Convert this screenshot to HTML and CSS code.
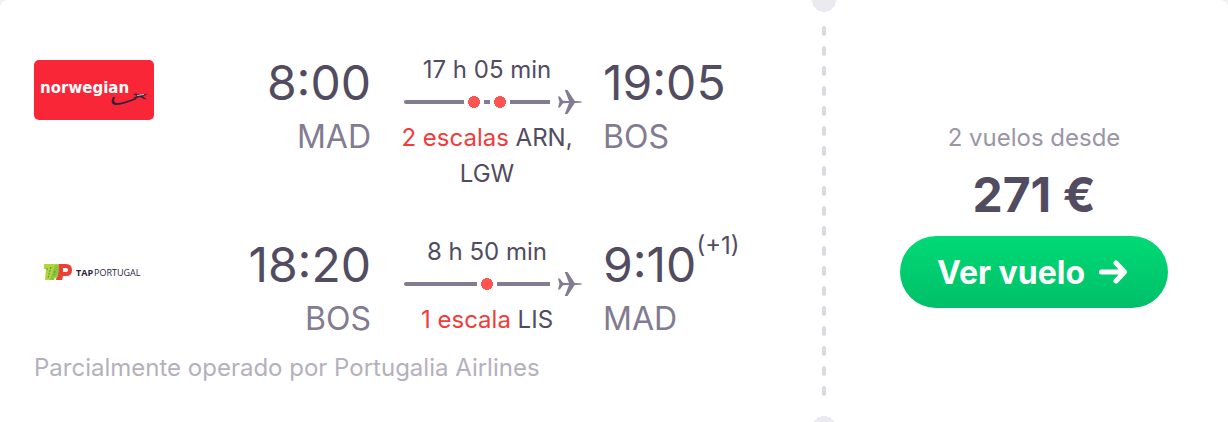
FILE: index.html
```html
<!DOCTYPE html>
<html lang="es">
<head>
  <meta charset="UTF-8" />
  <meta name="viewport" content="width=device-width, initial-scale=1.0" />
  <title>Madrid - Boston</title>
  <link rel="stylesheet" href="styles.css">
</head>
<body>
  <svg width="0" height="0" class="sprite" aria-hidden="true">
    <symbol id="plane" viewBox="0 0 24 24">
      <path d="M0 6.500h1.800L5 10.800l6 .2L6.800 0h2.700l7.200 11 5 .2Q24 11.400 24 12t-2.300.8l-5 .2-7.200 11H6.800L11 13l-6 .2-3.200 4.300H0L1.500 12z" />
    </symbol>
  </svg>

  <article class="ticket">
    <section class="legs">
      <div class="leg">
        <svg class="logo" viewBox="0 0 120 60" role="img" aria-label="norwegian">
          <rect width="120" height="60" rx="5" fill="#f92638" />
          <text class="norwegian" x="6" y="33">norwegian</text>
          <path d="M79 37q-4 8 4 8 7-.500 20-6l-1.500-1q-13 5-18 5-5 0-2.500-6z" fill="#30243c" />
          <path d="M99 38l4-2-4-2 3-.500 5 1.500 7-1.500-5 3 4 3-3-.500-4-2-5 1.500z" fill="#30243c" />
          <path d="M103 35.500l7-1" stroke="#c9b9c9" />
        </svg>
        <div class="point depart">
          <span class="time">8:00</span>
          <span class="airport">MAD</span>
        </div>
        <div class="route">
          <span>17 h 05 min</span>
          <div class="track">
            <i class="line"></i>
            <svg class="plane"><use href="#plane" /></svg>
            <div class="dots"><i></i><i></i></div>
          </div>
          <span><em>2 escalas</em> ARN, LGW</span>
        </div>
        <div class="point">
          <span class="time">19:05</span>
          <span class="airport">BOS</span>
        </div>
      </div>

      <div class="leg">
        <svg class="logo" viewBox="0 0 120 60" role="img" aria-label="TAP Portugal">
          <path d="M10 22h18l-2 16h-4l-1-3h-3l-1 3h-6l1-11h-2z" fill="#b5d43c" />
          <path d="M25 22h7q6 0 6 6t-6 6h-3l-1 4h-6l2-5z" fill="#ee3f35" />
          <path d="M21 23l-5 15h4l1-3h3l1-12z" fill="#8cc63f" />
          <path d="M29 26h3q2 0 2 2t-2 2h-3z" fill="#fff" />
          <path d="M17 25l-3 11M21 29l-1 4M13 26v2" stroke="#3f9c48" stroke-dasharray="2 1" />
          <text class="tap" x="42" y="34"><tspan class="tap-bold">TAP</tspan><tspan dx="1">PORTUGAL</tspan></text>
        </svg>
        <div class="point depart">
          <span class="time">18:20</span>
          <span class="airport">BOS</span>
        </div>
        <div class="route">
          <span>8 h 50 min</span>
          <div class="track">
            <i class="line"></i>
            <svg class="plane"><use href="#plane" /></svg>
            <div class="dots"><i></i></div>
          </div>
          <span><em>1 escala</em> LIS</span>
        </div>
        <div class="point">
          <span class="time">9:10<sup>(+1)</sup></span>
          <span class="airport">MAD</span>
        </div>
      </div>

      <p class="note">Parcialmente operado por Portugalia Airlines</p>
    </section>

    <aside class="offer">
      <p class="count">2 vuelos desde</p>
      <p class="price">271 €</p>
      <button type="button">
        Ver vuelo
        <svg width="28" height="24" viewBox="0 0 28 24" aria-hidden="true">
          <path d="M2.500 12H25M17 3l8.500 9L17 21" />
        </svg>
      </button>
    </aside>
  </article>
</body>
</html>
```

FILE: styles.css
```css
:root {
  --dark: #524c61;
  --grey: #827b91;
  --red: #ff5452;
  --page: #f0eff4;
}

* {
  box-sizing: border-box;
}

body {
  margin: 0;
  font-family: Inter, "Liberation Sans", sans-serif;
  background: var(--page);
  color: var(--dark);
}

p {
  margin: 0;
}

.sprite {
  position: absolute;
}

.ticket {
  display: grid;
  grid-template-columns: 824fr 404fr;
  min-height: 100vh;
  background: white;
  border-radius: 8px 8px 0 0;
  overflow: hidden;
}

.legs {
  padding: 52px 20px 34px 34px;
}

.leg {
  display: grid;
  grid-template-columns: 120px 1fr 200px 1fr;
  column-gap: 16px;
  align-items: start;
}

.leg + .leg {
  margin-top: 42px;
}

.logo {
  width: 120px;
  height: 60px;
  margin-top: 8px;
}

.norwegian {
  font: 700 15px "DejaVu Sans", sans-serif;
  fill: white;
}

.tap {
  font: 9px "Open Sans", sans-serif;
  fill: #2b2440;
}

.tap-bold {
  font-weight: 700;
}

.point {
  display: flex;
  flex-direction: column;
  padding-top: 3px;
}

.depart {
  text-align: right;
}

.time {
  height: 56px;
  font-size: 48px;
  line-height: 56px;
  white-space: nowrap;
}

.time sup {
  font-size: 24px;
  line-height: 0;
  vertical-align: 28px;
}

.airport {
  margin-top: 6px;
  color: var(--grey);
  font-size: 32px;
  line-height: 40px;
}

.route {
  display: flex;
  flex-direction: column;
  padding: 0 12px;
  font-size: 24px;
  line-height: 36px;
  text-align: center;
}

.route em {
  color: #f23c3c;
  font-style: normal;
}

.track {
  position: relative;
  display: flex;
  align-items: center;
  gap: 8px;
  height: 28px;
  margin: 0 -7px 4px 5px;
}

.line {
  flex: 1;
  height: 4px;
  border-radius: 2px 0 0 2px;
  background: var(--grey);
}

.plane {
  width: 24px;
  height: 24px;
  fill: var(--grey);
}

/* stops sit on top of the line, the white ring cuts it */
.dots {
  position: absolute;
  inset: 0 13px 0 0;
  display: flex;
  align-items: center;
  justify-content: center;
  gap: 6px;
}

.dots i {
  width: 20px;
  height: 20px;
  border: 4px solid white;
  border-radius: 4px;
  background: radial-gradient(circle, var(--red) 6px, white 6px) padding-box;
}

.note {
  margin-top: 11px;
  color: #b5b0bd;
  font-size: 24px;
  line-height: 36px;
}

.offer {
  position: relative;
  display: flex;
  flex-direction: column;
  align-items: center;
  padding: 120px 60px 36px 76px;
}

/* perforation */
.offer::before {
  content: "";
  position: absolute;
  top: 26px;
  bottom: 26px;
  left: -2px;
  width: 4px;
  background: radial-gradient(circle at 2px 2px, #dddbe1 2px, transparent 2px) 0 0 / 4px 20px,
    radial-gradient(circle at 2px 8px, #dddbe1 2px, transparent 2px) 0 0 / 4px 20px,
    linear-gradient(transparent 2px, #dddbe1 2px, #dddbe1 8px, transparent 8px) 0 0 / 4px 20px;
}

.offer::after {
  content: "";
  position: absolute;
  top: -12px;
  bottom: -18px;
  left: -12px;
  width: 24px;
  background: radial-gradient(circle at 12px 12px, #ebeaf0 12px, transparent 12px) top / 24px 24px no-repeat,
    radial-gradient(circle at 12px 12px, #ebeaf0 12px, transparent 12px) bottom / 24px 24px no-repeat;
}

.count {
  color: #9b95a6;
  font-size: 24px;
  line-height: 36px;
}

.price {
  margin: 11px 0 13px;
  font-size: 48px;
  font-weight: 700;
  line-height: 56px;
}

button {
  display: flex;
  align-items: center;
  justify-content: center;
  gap: 14px;
  width: 100%;
  max-width: 320px;
  height: 72px;
  padding: 0 4px 0 0;
  border: none;
  border-radius: 36px;
  background: linear-gradient(#00da76, #00bf68);
  color: white;
  font: 700 32px Inter, "Liberation Sans", sans-serif;
  white-space: nowrap;
  cursor: pointer;
}

button path {
  fill: none;
  stroke: white;
  stroke-width: 5;
  stroke-linecap: round;
  stroke-linejoin: round;
}
```
